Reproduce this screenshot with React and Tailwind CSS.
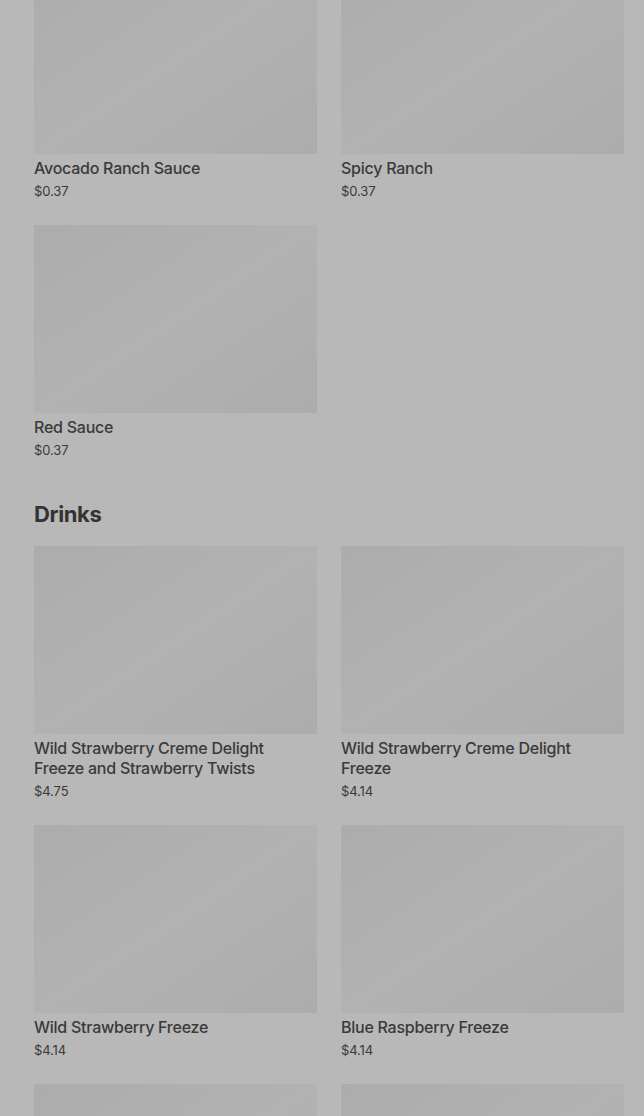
import React from "react";

const font = { fontFamily: "Inter, 'Noto Sans', sans-serif" };

function Card({ title, price }) {
  return (
    <div className="flex flex-col">
      <div className="h-[188px] w-full bg-linear-to-br from-[#acacac] via-[#b2b2b2] to-[#acacac]" />
      <div className="mt-[4px] text-[16px] leading-[20px] font-medium text-[#3a3a3a] tracking-[-0.25px]">{title}</div>
      <div className="mt-[4px] text-[13px] leading-[18px] text-[#3a3a3a] tracking-[-0.1px]">{price}</div>
    </div>
  );
}

export default function App() {
  return (
    <div className="h-[1116px] w-[644px] overflow-hidden bg-[#b8b8b8]" style={font}>
      <div className="-mt-[34px] pl-[34px] pr-[20px]">
        <div className="grid grid-cols-2 gap-x-[24px] gap-y-[25px]">
          <Card title="Avocado Ranch Sauce" price="$0.37" />
          <Card title="Spicy Ranch" price="$0.37" />
          <Card title="Red Sauce" price="$0.37" />
        </div>
        <h2 className="mt-[40px] text-[22px] leading-[30px] font-bold text-[#333] tracking-[-0.4px]">Drinks</h2>
        <div className="mt-[17px] grid grid-cols-2 gap-x-[24px] gap-y-[25px]">
          <Card title="Wild Strawberry Creme Delight Freeze and Strawberry Twists" price="$4.75" />
          <Card title="Wild Strawberry Creme Delight Freeze" price="$4.14" />
          <Card title="Wild Strawberry Freeze" price="$4.14" />
          <Card title="Blue Raspberry Freeze" price="$4.14" />
          <Card title="" price="" />
          <Card title="" price="" />
        </div>
      </div>
    </div>
  );
}
